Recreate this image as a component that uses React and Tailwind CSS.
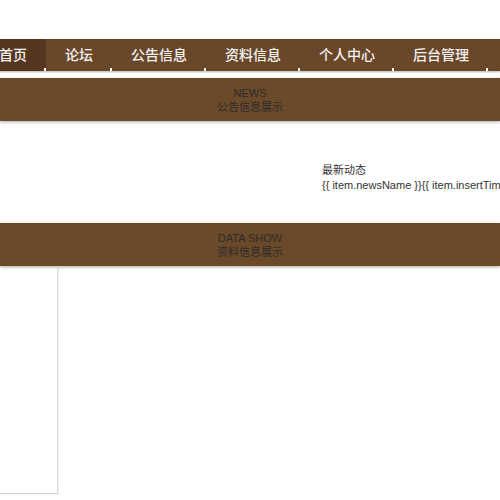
const navItems = [
  { name: '首页', active: true },
  { name: '论坛' },
  { name: '公告信息' },
  { name: '资料信息' },
  { name: '个人中心' },
  { name: '后台管理' },
];

function SectionTitle({ en, zh }) {
  return (
    <div className="h-[43px] bg-[#6b4a2a] shadow-[0_1px_3px_rgba(0,0,0,0.35)] flex flex-col items-center justify-center text-[11px] leading-[14px] text-[#2b2b2b]">
      <span>{en}</span>
      <span>{zh}</span>
    </div>
  );
}

export default function App() {
  return (
    <div
      className="w-[500px] h-[500px] overflow-hidden bg-white"
      style={{ fontFamily: '"Liberation Sans", "Noto Sans CJK SC", sans-serif' }}
    >
      <div className="h-[39px]" />

      {/* main navigation */}
      <nav className="h-[32px] bg-[#6a4729] shadow-[0_1px_2px_rgba(0,0,0,0.3)] flex -ml-[20px]">
        {navItems.map((item) => (
          <div
            key={item.name}
            className={`relative shrink-0 px-[19px] flex items-center text-[14px] font-medium text-[#f2f2f2] ${
              item.active ? 'bg-[#553620]' : ''
            }`}
          >
            {item.name}
            <span className="absolute right-0 bottom-0 w-[2px] h-[3px] bg-white" />
          </div>
        ))}
      </nav>

      <div className="h-[7px]" />

      <SectionTitle en="NEWS" zh="公告信息展示" />

      {/* latest news */}
      <div className="h-[102px] pt-[42px] flex">
        <div className="w-[322px] shrink-0" />
        <div className="text-[11px] leading-[15px] text-[#333] whitespace-nowrap">
          <div>最新动态</div>
          <div>{'{{ item.newsName }}{{ item.insertTime }}'}</div>
        </div>
      </div>

      <SectionTitle en="DATA SHOW" zh="资料信息展示" />

      {/* data list */}
      <div className="-ml-[200px] w-[258px] h-[228px] border-r border-b border-[#d6d6d6] shadow-[1px_1px_1px_rgba(0,0,0,0.05)]" />
    </div>
  );
}
